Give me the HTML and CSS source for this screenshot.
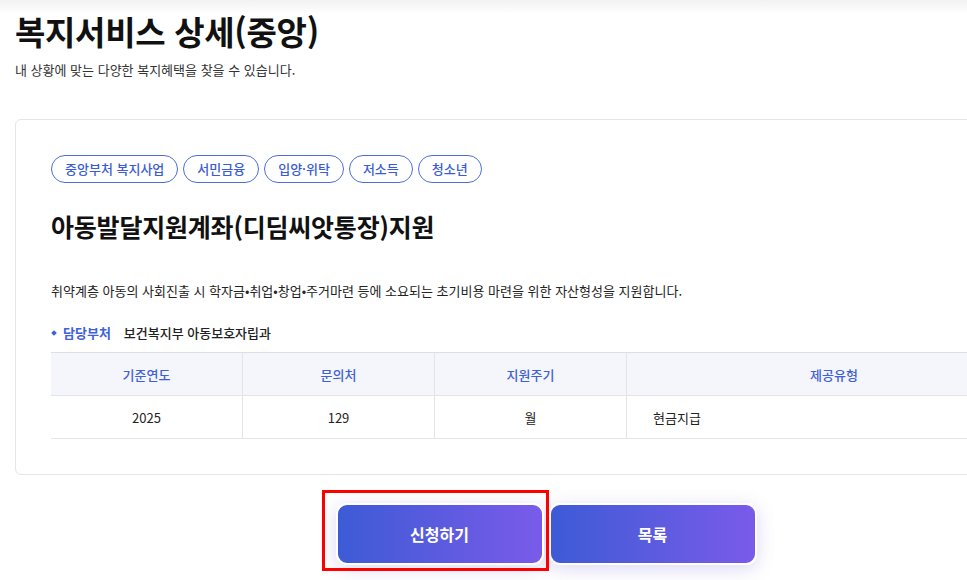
FILE: index.html
```html
<!DOCTYPE html>
<html lang="ko">
<head>
    <meta charset="UTF-8">
    <meta name="viewport" content="width=device-width, initial-scale=1.0">
    <title>복지서비스 상세(중앙)</title>
    <link rel="stylesheet" href="styles.css">
</head>
<body>
    <div class="page">
        <!-- 페이지 제목 -->
        <div class="page-head">
            <h1 class="page-title">복지서비스 상세(중앙)</h1>
            <p class="page-desc">내 상황에 맞는 다양한 복지혜택을 찾을 수 있습니다.</p>
        </div>

        <!-- 상세 카드 -->
        <div class="detail-card">
            <div class="tags">
                <span class="tag">중앙부처 복지사업</span>
                <span class="tag">서민금융</span>
                <span class="tag">입양·위탁</span>
                <span class="tag">저소득</span>
                <span class="tag">청소년</span>
            </div>
            <h2 class="service-name">아동발달지원계좌(디딤씨앗통장)지원</h2>
            <p class="service-desc">취약계층 아동의 사회진출 시 학자금•취업•창업•주거마련 등에 소요되는 초기비용 마련을 위한 자산형성을 지원합니다.</p>
            <div class="dept">
                <span class="dept-label">담당부처</span>
                <span class="dept-name">보건복지부 아동보호자립과</span>
            </div>
            <div class="info-table">
                <div class="th">기준연도</div>
                <div class="th">문의처</div>
                <div class="th">지원주기</div>
                <div class="th">제공유형</div>
                <div class="td">2025</div>
                <div class="td">129</div>
                <div class="td">월</div>
                <div class="td td-left">현금지급</div>
            </div>
        </div>

        <!-- 버튼 -->
        <div class="btn-row">
            <div class="btn-wrap">
                <button class="btn">신청하기</button>
                <div class="highlight"></div>
            </div>
            <button class="btn">목록</button>
        </div>
    </div>
</body>
</html>
```

FILE: styles.css
```css
body {
    margin: 0;
    overflow: hidden;
    background-color: #fff;
    background-image: linear-gradient(#f2f2f2, #fff);
    background-size: 100% 14px;
    background-repeat: no-repeat;
    color: #111;
    font-family: "Noto Sans CJK KR", "Noto Sans", sans-serif;
}
.page {
    width: 1062px;
    padding: 9px 0 15px 15px;
}
.page-head {
    height: 110px;
}
.page-title {
    margin: 0;
    font-size: 33px;
    font-weight: 700;
    line-height: 44px;
    letter-spacing: -0.3px;
}
.page-desc {
    margin: 7px 0 0;
    font-size: 13px;
    line-height: 20px;
    color: #333;
}
.detail-card {
    border: 1px solid #e5e5e5;
    border-radius: 6px;
    background: #fff;
    padding: 35px 35px 35px;
}
.tags {
    display: flex;
    gap: 5px;
}
.tag {
    height: 26px;
    line-height: 26px;
    padding: 0 13px;
    border: 1px solid #4c6ddb;
    border-radius: 14px;
    color: #3a5cd4;
    font-size: 13px;
    font-weight: 500;
}
.service-name {
    margin: 25px 0 0;
    font-size: 25px;
    font-weight: 700;
    line-height: 36px;
    letter-spacing: -0.2px;
}
.service-desc {
    margin: 37px 0 0;
    font-size: 13px;
    line-height: 20px;
    color: #222;
}
.dept {
    margin-top: 22px;
    display: flex;
    align-items: center;
    font-size: 13px;
    line-height: 20px;
    font-weight: 700;
}
.dept-label {
    color: #3f61d6;
    padding-left: 12px;
    position: relative;
}
.dept-label::before {
    content: "";
    position: absolute;
    left: 1px;
    top: 50%;
    width: 4px;
    height: 4px;
    margin-top: -2px;
    background: #3f61d6;
    transform: rotate(45deg);
}
.dept-name {
    margin-left: 13px;
    color: #222;
    font-weight: 500;
}
.info-table {
    margin-top: 9px;
    display: grid;
    grid-template-columns: 191px 192px 192px 1fr;
    border-top: 1px solid #dedede;
}
.th, .td {
    height: 42px;
    display: flex;
    align-items: center;
    justify-content: center;
    font-size: 13px;
    border-bottom: 1px solid #e4e4e4;
    border-left: 1px solid #e4e4e4;
}
.th:nth-child(4n+1), .td:nth-child(4n+1) {
    border-left: none;
}
.th {
    background: #f4f6fb;
    color: #3f61d6;
    font-weight: 500;
}
.td {
    color: #222;
}
.td-left {
    justify-content: flex-start;
    padding-left: 26px;
}
.btn-row {
    display: flex;
    justify-content: center;
    gap: 5px;
    margin-top: 28px;
}
.btn-wrap {
    position: relative;
}
.btn {
    width: 208px;
    height: 62px;
    border: 2px solid #fff;
    border-radius: 11px;
    background: linear-gradient(90deg, #3d5bd6, #7a5be9);
    box-shadow: 0 4px 18px rgba(90, 80, 200, 0.22);
    color: #fff;
    font-family: inherit;
    font-size: 16px;
    font-weight: 700;
}
/* 빨간 강조 박스 */
.highlight {
    position: absolute;
    left: -14px;
    top: -13px;
    right: -5px;
    bottom: -6px;
    border: 3px solid #f00;
}
```
